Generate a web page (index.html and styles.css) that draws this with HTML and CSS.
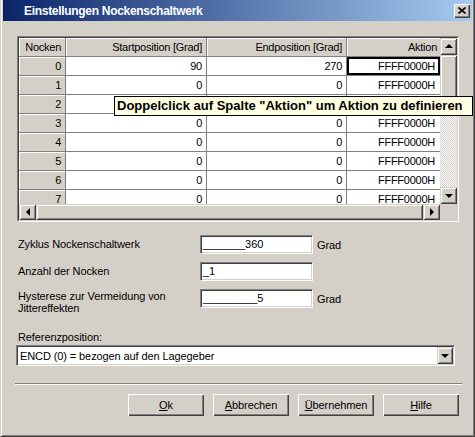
FILE: index.html
```html
<!DOCTYPE html>
<html lang="de">
<head>
  <meta charset="UTF-8" />
  <title>Einstellungen Nockenschaltwerk</title>
  <link rel="stylesheet" href="styles.css">
</head>
<body>

<div class="window">
  <!-- Title bar -->
  <div class="titlebar">
    <span class="title">Einstellungen Nockenschaltwerk</span>
    <span class="close">
      <svg width="8" height="7" viewBox="0 0 8 7"><path d="M0.5 0.5 L7.5 6.5 M7.5 0.5 L0.5 6.5" stroke="#000" stroke-width="1.6" fill="none"/></svg>
    </span>
  </div>

  <div class="content">
    <!-- Cam table -->
    <div class="grid">
      <div class="grid-inner">
        <div class="grid-main">
          <div class="table">
            <div class="hcell">Nocken</div>
            <div class="hcell">Startposition [Grad]</div>
            <div class="hcell">Endposition [Grad]</div>
            <div class="hcell">Aktion</div>

            <div class="rcell">0</div><div class="cell">90</div><div class="cell">270</div><div class="cell selected">FFFF0000H</div>
            <div class="rcell">1</div><div class="cell">0</div><div class="cell">0</div><div class="cell">FFFF0000H</div>
            <div class="rcell">2</div><div class="cell">0</div><div class="cell">0</div><div class="cell">FFFF0000H</div>
            <div class="rcell">3</div><div class="cell">0</div><div class="cell">0</div><div class="cell">FFFF0000H</div>
            <div class="rcell">4</div><div class="cell">0</div><div class="cell">0</div><div class="cell">FFFF0000H</div>
            <div class="rcell">5</div><div class="cell">0</div><div class="cell">0</div><div class="cell">FFFF0000H</div>
            <div class="rcell">6</div><div class="cell">0</div><div class="cell">0</div><div class="cell">FFFF0000H</div>
            <div class="rcell">7</div><div class="cell">0</div><div class="cell">0</div><div class="cell">FFFF0000H</div>
          </div>
          <div class="vscroll">
            <div class="sbtn"><i class="arrow up"></i></div>
            <div class="track"><div class="vthumb"></div></div>
            <div class="sbtn"><i class="arrow down"></i></div>
          </div>
        </div>
        <div class="grid-bottom">
          <div class="hscroll">
            <div class="sbtn"><i class="arrow left"></i></div>
            <div class="hthumb"></div>
            <div class="sbtn"><i class="arrow right"></i></div>
          </div>
          <div class="corner"></div>
        </div>
      </div>
    </div>

    <!-- Parameter fields -->
    <div class="fields">
      <div class="label">Zyklus Nockenschaltwerk</div>
      <div class="input">_______360</div>
      <div class="unit">Grad</div>

      <div class="label">Anzahl der Nocken</div>
      <div class="input">_1</div>
      <div class="unit"></div>

      <div class="label two">Hysterese zur Vermeidung von<br>Jittereffekten</div>
      <div class="input">_________5</div>
      <div class="unit">Grad</div>
    </div>

    <div class="ref-label">Referenzposition:</div>
    <div class="select">
      <span>ENCD (0) = bezogen auf den Lagegeber</span>
      <span class="drop"><i class="arrow down"></i></span>
    </div>

    <div class="separator"></div>

    <div class="buttons">
      <button><u>O</u>k</button>
      <button><u>A</u>bbrechen</button>
      <button><u>Ü</u>bernehmen</button>
      <button><u>H</u>ilfe</button>
    </div>
  </div>

  <div class="tooltip">Doppelclick auf Spalte &quot;Aktion&quot; um Aktion zu definieren</div>
</div>

</body>
</html>
```

FILE: styles.css
```css
/* Basic reset */
* { margin: 0; padding: 0; box-sizing: border-box; }
body { font-family: "Liberation Sans", Arial, sans-serif; font-size: 11px; letter-spacing: -0.1px; color: #000; background: #d4d0c8; }

/* Window frame */
.window { position: relative; width: 475px; height: 437px; background: #d4d0c8; border: 1px solid; border-top: 0; border-color: #d4d0c8 #404040 #404040 #d4d0c8; box-shadow: inset 1px 0 #fff, inset -1px -1px #808080; padding: 0 2px 2px 2px; }
.titlebar { height: 21px; display: flex; align-items: center; padding-left: 21px; background: linear-gradient(to right, #0a246a, #a6caf0); color: #fff; font-weight: bold; font-size: 12px; letter-spacing: -0.3px; }
.close { margin-left: auto; margin-right: 2px; width: 16px; height: 14px; display: flex; align-items: center; justify-content: center; background: #d4d0c8; box-shadow: inset 1px 1px #fff, inset -1px -1px #404040, inset -2px -2px #808080; }

.content { padding: 15px 0 0 13px; }

/* Grid */
.grid { width: 442px; margin-left: 1px; border: 1px solid; border-color: #808080 #fff #fff #808080; }
.grid-inner { border: 1px solid; border-color: #404040 #d4d0c8 #d4d0c8 #404040; }
.grid-main { display: flex; height: 166px; }
.table { width: 421px; overflow: hidden; display: grid; grid-template-columns: 47px 141px 140px 93px; grid-auto-rows: 19px; align-content: start; background: #fff; letter-spacing: -0.25px; }
.hcell, .rcell, .cell { display: flex; align-items: center; justify-content: flex-end; padding-right: 4px; white-space: nowrap; border-right: 1px solid #808080; border-bottom: 1px solid #808080; }
.hcell, .rcell { background: #d4d0c8; box-shadow: inset 1px 1px #fff; }
.hcell:nth-child(4) { border-right: 0; padding-right: 3px; }
.cell:nth-child(4n) { border-right: 0; padding-right: 5px; }
.cell.selected { box-shadow: inset 0 0 0 2px #000; }

/* Scrollbars */
.sbtn { width: 17px; height: 17px; flex: none; display: flex; align-items: center; justify-content: center; background: #d4d0c8; box-shadow: inset 1px 1px #d4d0c8, inset -1px -1px #404040, inset 2px 2px #fff, inset -2px -2px #808080; }
.vscroll { width: 17px; display: flex; flex-direction: column; }
.track { flex: 1; background: repeating-conic-gradient(#d4d0c8 0 25%, #fff 0 50%) 0 0 / 2px 2px; }
.vthumb { height: 48px; background: #d4d0c8; box-shadow: inset 1px 1px #d4d0c8, inset -1px -1px #404040, inset 2px 2px #fff, inset -2px -2px #808080; }
.grid-bottom { display: flex; height: 16px; }
.hscroll { width: 421px; display: flex; }
.hscroll .sbtn { height: 16px; }
.hthumb { flex: 1; background: #d4d0c8; box-shadow: inset 1px 1px #d4d0c8, inset -1px -1px #404040, inset 2px 2px #fff, inset -2px -2px #808080; }
.corner { width: 17px; background: #d4d0c8; }

.arrow { display: block; width: 0; height: 0; border: 4px solid transparent; }
.arrow.up { border-top: 0; border-bottom-color: #000; margin-top: -1px; }
.arrow.down { border-bottom: 0; border-top-color: #000; }
.arrow.left { border-left: 0; border-right-color: #000; }
.arrow.right { border-right: 0; border-left-color: #000; }

/* Fields */
.fields { display: grid; grid-template-columns: 182px 113px auto; row-gap: 8px; align-items: center; margin-top: 13px; padding-left: 2px; }
.label { line-height: 13px; }
.label.two { align-self: start; line-height: 12px; margin-top: 1px; margin-bottom: -8px; }
.input { height: 19px; background: #fff; border: 1px solid; border-color: #808080 #fff #fff #808080; box-shadow: inset 1px 1px #404040, inset -1px -1px #d4d0c8; padding: 1px 2px; line-height: 15px; white-space: nowrap; }
.unit { padding-left: 4px; }

.ref-label { margin-top: 23px; padding-left: 2px; line-height: 13px; }
.select { display: flex; align-items: center; width: 439px; height: 21px; margin-top: 1px; background: #fff; border: 1px solid; border-color: #808080 #fff #fff #808080; box-shadow: inset 1px 1px #404040, inset -1px -1px #d4d0c8; padding: 1px 1px 1px 3px; }
.drop { margin-left: auto; width: 16px; height: 17px; display: flex; align-items: center; justify-content: center; background: #d4d0c8; box-shadow: inset 1px 1px #d4d0c8, inset -1px -1px #404040, inset 2px 2px #fff, inset -2px -2px #808080; }

.separator { width: 447px; height: 2px; margin: 17px 0 0 -1px; border-top: 1px solid #808080; border-bottom: 1px solid #fff; }

/* Buttons */
.buttons { display: flex; gap: 9px; margin-top: 9px; padding-left: 112px; }
.buttons button { width: 76px; height: 22px; font-family: inherit; font-size: 11px; letter-spacing: -0.1px; color: #000; background: #d4d0c8; border: 0; box-shadow: inset 1px 1px #fff, inset -1px -1px #404040, inset -2px -2px #808080; }

/* Tooltip */
.tooltip { position: absolute; left: 113px; top: 96px; width: 359px; height: 20px; border: 1px solid #000; background: #ffffe1; font-weight: bold; font-size: 13px; letter-spacing: 0; line-height: 18px; padding-left: 2px; white-space: nowrap; }
```
